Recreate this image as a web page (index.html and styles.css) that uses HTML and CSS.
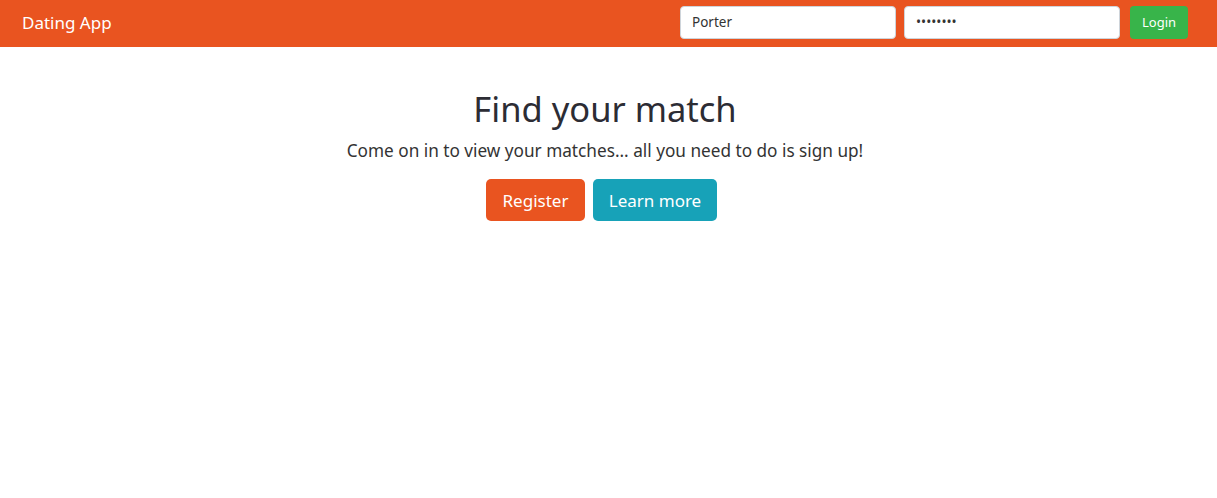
FILE: index.html
```html
<!DOCTYPE html>
<html lang="en">
<head>
<meta charset="utf-8">
<title>Dating App</title>
<link rel="stylesheet" href="styles.css">
</head>
<body>
<nav class="navbar">
  <a class="brand" href="#">Dating App</a>
  <form class="login-form">
    <input class="field" type="text" value="Porter">
    <input class="field" type="password" value="password">
    <button class="btn-login" type="button">Login</button>
  </form>
</nav>
<main class="hero">
  <h1 class="title">Find your match</h1>
  <p class="lead">Come on in to view your matches... all you need to do is sign up!</p>
  <div class="actions">
    <button class="btn btn-register" type="button">Register</button>
    <button class="btn btn-learn" type="button">Learn more</button>
  </div>
</main>
</body>
</html>
```

FILE: styles.css
```css
* { box-sizing: border-box; }
body {
  margin: 0;
  font-family: "Noto Sans", "Open Sans", sans-serif;
  color: #333;
  background: #fff;
}
.navbar {
  height: 47px;
  background: #e95420;
  display: flex;
  align-items: center;
  justify-content: space-between;
  padding: 0 29px 3px 22px;
}
.brand {
  color: #fff;
  text-decoration: none;
  font-size: 17px;
}
.login-form {
  display: flex;
  align-items: center;
  gap: 8px;
}
.field {
  width: 216px;
  height: 33px;
  border: 1px solid #ced4da;
  border-radius: 4px;
  padding: 0 11px;
  font-family: inherit;
  font-size: 13.5px;
  color: #333;
  background: #fff;
}
.btn-login {
  margin-left: 2px;
  height: 33px;
  width: 58px;
  border: none;
  border-radius: 4px;
  background: #38b44a;
  color: #fff;
  font-family: inherit;
  font-size: 13px;
  padding: 0;
}
.hero {
  display: flex;
  flex-direction: column;
  align-items: center;
  padding: 38px 7px 0 0;
}
.title {
  margin: 0;
  font-weight: 400;
  font-size: 34.5px;
  line-height: 48px;
  color: #2c2c34;
}
.lead {
  margin: 6px 0 0;
  font-size: 17.2px;
  line-height: 24px;
}
.actions {
  display: flex;
  gap: 8px;
  margin: 16px 7px 0 0;
}
.btn {
  height: 42px;
  border: none;
  border-radius: 5px;
  color: #fff;
  font-family: inherit;
  font-size: 17px;
  padding: 0 15px;
}
.btn-register { background: #e95420; width: 99px; }
.btn-learn { background: #17a2b8; width: 124px; }
```
